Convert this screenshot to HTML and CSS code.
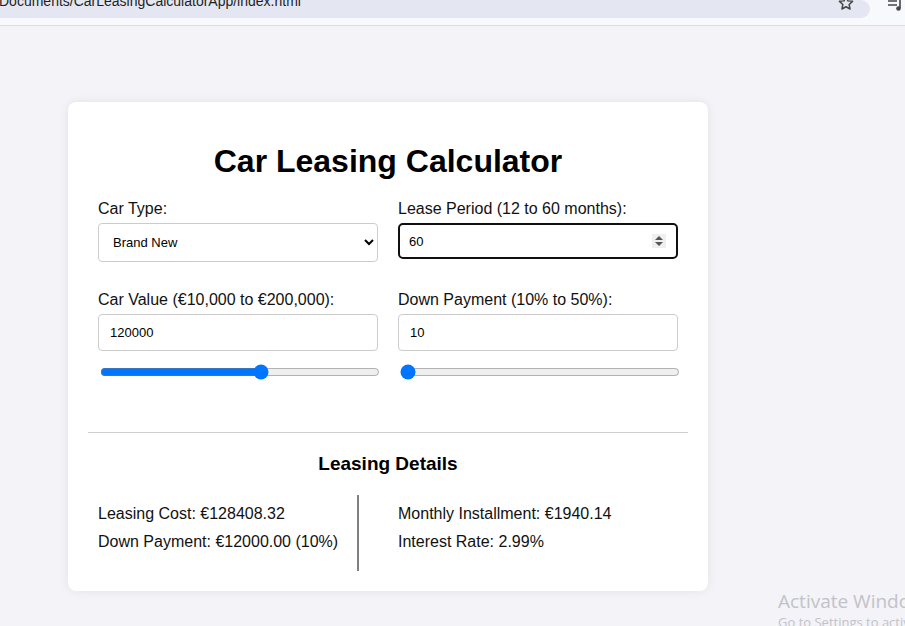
FILE: index.html
```html
<!DOCTYPE html>
<html>
<head>
<meta charset="utf-8">
<title>Car Leasing Calculator</title>
<link rel="stylesheet" href="styles.css">
</head>
<body>
<header class="chrome">
  <div class="omnibox">
    <span class="url">Documents/CarLeasingCalculatorApp/index.html</span>
    <svg class="star" width="18" height="18" viewBox="0 0 24 24"><path d="M12 3.5l2.6 5.6 6.1.7-4.5 4.2 1.2 6-5.4-3-5.4 3 1.2-6-4.5-4.2 6.1-.7z" fill="none" stroke="#474747" stroke-width="2" stroke-linejoin="round"/></svg>
  </div>
  <svg class="media" width="18" height="14" viewBox="0 0 18 14"><path d="M1 1h9M1 5h9" stroke="#474747" stroke-width="1.6"/><path d="M13 0v8" stroke="#474747" stroke-width="1.6"/><circle cx="11.5" cy="8.5" r="2.3" fill="#474747"/></svg>
</header>
<main class="page">
  <section class="card">
    <h1 class="title">Car Leasing Calculator</h1>
    <div class="form-grid">
      <div class="field">
        <label class="label" for="carType">Car Type:</label>
        <select id="carType" class="control select">
          <option>Brand New</option>
          <option>Used</option>
        </select>
      </div>
      <div class="field">
        <label class="label" for="period">Lease Period (12 to 60 months):</label>
        <div class="control focus-box">
          <input id="period" class="bare" type="text" value="60">
          <span class="spinner">
            <svg width="14" height="14" viewBox="0 0 14 14"><path d="M3 6h8L7 2z" fill="#555"/><path d="M3 8h8l-4 4z" fill="#555"/></svg>
          </span>
        </div>
      </div>
      <div class="field">
        <label class="label" for="carValue">Car Value (€10,000 to €200,000):</label>
        <input id="carValue" class="control input" type="text" value="120000">
        <input class="range" type="range" min="10000" max="200000" value="120000">
      </div>
      <div class="field">
        <label class="label" for="down">Down Payment (10% to 50%):</label>
        <input id="down" class="control input" type="text" value="10">
        <input class="range" type="range" min="10" max="50" value="10">
      </div>
    </div>
    <hr class="divider">
    <h3 class="subtitle">Leasing Details</h3>
    <div class="results">
      <div class="col col-left">
        <p>Leasing Cost: €128408.32</p>
        <p>Down Payment: €12000.00 (10%)</p>
      </div>
      <div class="col col-right">
        <p>Monthly Installment: €1940.14</p>
        <p>Interest Rate: 2.99%</p>
      </div>
    </div>
  </section>
</main>
<div class="watermark">
  <div class="wm-big">Activate Windows</div>
  <div class="wm-small">Go to Settings to activate Windows.</div>
</div>
</body>
</html>
```
FILE: styles.css
```css
html, body {
  margin: 0;
  padding: 0;
}
body {
  background: #f3f3f8;
  font-family: "Liberation Sans", Arial, sans-serif;
  color: #000;
  height: 626px;
  overflow: hidden;
}
.chrome {
  height: 25px;
  background: #f8f9fd;
  border-bottom: 1px solid #dcdde3;
  display: flex;
  align-items: flex-start;
  overflow: hidden;
}
.omnibox {
  width: 870px;
  height: 18px;
  background: #e4e7f1;
  border-radius: 0 14px 14px 0;
  display: flex;
  align-items: flex-start;
  overflow: hidden;
  flex: none;
}
.url {
  font-family: "Liberation Sans", Arial, sans-serif;
  font-size: 14px;
  line-height: 18px;
  color: #1f1f1f;
  margin-top: -8px;
  margin-left: -1px;
  white-space: nowrap;
  flex: 1;
}
.star {
  margin-top: -6px;
  margin-right: 15px;
  flex: none;
}
.media {
  margin-left: 17px;
  margin-top: 0px;
  flex: none;
}
.page {
  padding: 76px 0 0 68px;
}
.card {
  width: 580px;
  background: #fff;
  border-radius: 8px;
  box-shadow: 0 0 10px rgba(0, 0, 0, 0.08);
  padding: 41px 30px 20px;
}
.title {
  margin: 0;
  font-size: 32px;
  line-height: 37px;
  font-weight: bold;
  text-align: center;
}
.form-grid {
  margin-top: 20px;
  display: grid;
  grid-template-columns: 280px 280px;
  column-gap: 20px;
  row-gap: 29px;
}
.field {
  display: flex;
  flex-direction: column;
}
.label {
  display: block;
  font-size: 16px;
  line-height: 18px;
  margin-bottom: 5px;
  color: #111;
}
.control {
  box-sizing: border-box;
  width: 280px;
  border: 1px solid #ccc;
  border-radius: 4px;
  font-family: "Liberation Sans", Arial, sans-serif;
  font-size: 13px;
  background: #fff;
  color: #000;
}
.select {
  height: 39px;
  padding: 0 6px 0 10px;
}
.input {
  height: 37px;
  padding: 0 10px 0 11px;
  outline: none;
}
.focus-box {
  height: 36px;
  border: 2px solid #101010;
  border-radius: 5px;
  display: flex;
  align-items: center;
  padding: 0 10px 0 9px;
}
.bare {
  flex: 1;
  min-width: 0;
  border: none;
  outline: none;
  padding: 0;
  font-family: "Liberation Sans", Arial, sans-serif;
  font-size: 13px;
  background: transparent;
}
.spinner {
  width: 14px;
  height: 14px;
  background: #efefef;
  display: flex;
}
.range {
  width: 280px;
  margin: 13px 0 0 2px;
  height: 16px;
  accent-color: #0075ff;
}
.divider {
  border: none;
  border-top: 1px solid #cfcfcf;
  margin: 52px -10px 0;
}
.subtitle {
  margin: 19px 0 0;
  font-size: 19px;
  line-height: 23px;
  font-weight: bold;
  text-align: center;
}
.results {
  margin-top: 20px;
  display: flex;
}
.col p {
  margin: 0 0 10px;
  font-size: 16px;
  line-height: 18px;
  color: #111;
}
.col {
  padding: 10px 0 10px;
}
.col-left {
  width: 259px;
  border-right: 2px solid #808080;
}
.col-right {
  margin-left: 39px;
}
.watermark {
  position: absolute;
  left: 778px;
  top: 589px;
  white-space: nowrap;
  color: #c2c2c8;
  font-family: "Open Sans", "Noto Sans", sans-serif;
}
.wm-big {
  font-size: 19px;
  line-height: 24px;
}
.wm-small {
  font-size: 13px;
  line-height: 16px;
  margin-top: 1px;
}
```
